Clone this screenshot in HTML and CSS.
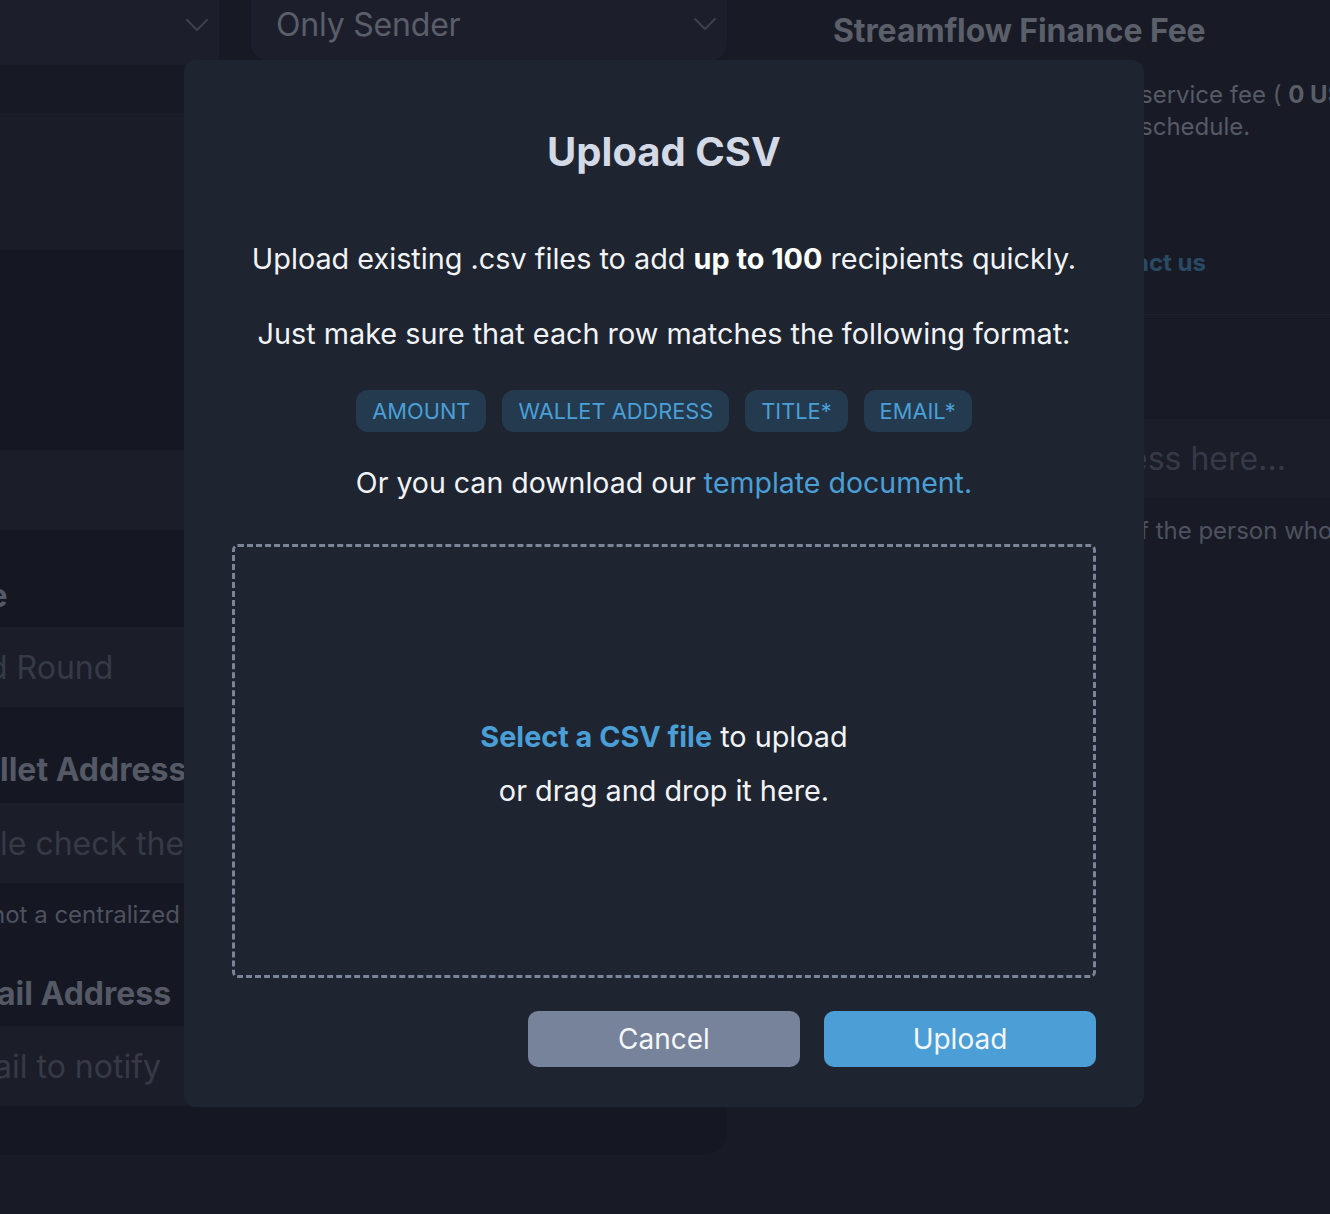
FILE: index.html
```html
<!DOCTYPE html>
<html lang="en">
<head>
<meta charset="utf-8">
<title>Upload CSV</title>
<link rel="stylesheet" href="styles.css">
</head>
<body>
<div class="page">
  <div class="left-col">
    <div class="top-row">
      <div class="dd dd1">
        <svg class="chev" width="24" height="14" viewBox="0 0 24 14"><polyline points="2,2 12,12 22,2" fill="none" stroke="#3b3f4b" stroke-width="2.2" stroke-linecap="round" stroke-linejoin="round"/></svg>
      </div>
      <div class="dd-gap"></div>
      <div class="dd dd2">
        <span class="dd-value">Only Sender</span>
        <svg class="chev" width="24" height="14" viewBox="0 0 24 14"><polyline points="2,2 12,12 22,2" fill="none" stroke="#3b3f4b" stroke-width="2.2" stroke-linecap="round" stroke-linejoin="round"/></svg>
      </div>
    </div>
    <div class="stripe"></div>
    <div class="area-block"></div>
    <div class="dark-block"></div>
    <div class="field"></div>
    <div class="label-row lr1"><span class="label cut-e">Title</span></div>
    <div class="field"><span class="placeholder cut-d">d Round</span></div>
    <div class="label-row lr2"><span class="label">llet Address</span></div>
    <div class="field"><span class="placeholder">le check the</span></div>
    <div class="help-block">
      <span class="help">not a centralized</span>
      <span class="label cut-a">ail Address</span>
    </div>
    <div class="field"><span class="placeholder cut-n">ail to notify</span></div>
    <div class="card-foot"></div>
  </div>
  <div class="right-col">
    <h2 class="fee-title">Streamflow Finance Fee</h2>
    <div class="fee-text">
      <p>service fee ( <b>0 USDC</b> )</p>
      <p>schedule.</p>
    </div>
    <div class="contact">act us</div>
    <div class="separator"></div>
    <div class="r-field"><span class="placeholder">ess here...</span></div>
    <div class="r-help">f the person who</div>
  </div>
</div>

<div class="modal">
  <h1 class="modal-title">Upload CSV</h1>
  <p class="modal-text t1">Upload existing .csv files to add <b>up to 100</b> recipients quickly.</p>
  <p class="modal-text t2">Just make sure that each row matches the following format:</p>
  <div class="tags">
    <span class="tag">AMOUNT</span>
    <span class="tag">WALLET ADDRESS</span>
    <span class="tag">TITLE*</span>
    <span class="tag">EMAIL*</span>
  </div>
  <p class="modal-text t3">Or you can download our <a class="link" href="#">template document.</a></p>
  <div class="dropzone">
    <p class="drop-line"><a class="link strong" href="#">Select a CSV file</a> to upload</p>
    <p class="drop-line">or drag and drop it here.</p>
  </div>
  <div class="actions">
    <button class="btn btn-cancel">Cancel</button>
    <button class="btn btn-upload">Upload</button>
  </div>
</div>
</body>
</html>
```
FILE: styles.css
```css
* { box-sizing: border-box; }
html, body { margin: 0; padding: 0; }
body {
  width: 1330px;
  height: 1214px;
  overflow: hidden;
  background: #181b26;
  font-family: Inter, "Noto Sans", sans-serif;
  position: relative;
}
p, h1, h2 { margin: 0; }

.page {
  display: grid;
  grid-template-columns: 727px 1fr;
  height: 1214px;
}

/* ---------- left column (dimmed background) ---------- */
.left-col {
  background: #151823;
  border-bottom-right-radius: 24px;
  display: flex;
  flex-direction: column;
  align-self: start;
  overflow: hidden;
}
.top-row {
  display: flex;
  height: 65px;
  background: #171a25;
}
.dd {
  background: #1c1f2b;
  display: flex;
  align-items: center;
}
.dd1 {
  width: 219px;
  height: 65px;
  justify-content: flex-end;
  padding: 0 10px 16px 0;
}
.dd-gap { width: 32px; }
.dd2 {
  flex: 1;
  height: 60px;
  border-radius: 0 0 16px 16px;
  justify-content: space-between;
  padding: 0 10px 12px 25px;
}
.dd-value {
  font-size: 32px;
  color: #5a5e69;
  letter-spacing: -0.2px;
}
.stripe { height: 49px; background: #171a24; border-bottom: 1px solid #1b1e29; }
.area-block { height: 136px; background: #1a1d28; }
.dark-block { height: 200px; }
.field {
  height: 80px;
  background: #1b1e29;
  display: flex;
  align-items: center;
}
.placeholder {
  font-size: 32px;
  color: #363a46;
  white-space: nowrap;
}
.cut-d { margin-left: -12px; }
.cut-n { margin-left: -6px; }
.label {
  font-size: 32px;
  font-weight: 700;
  color: #545965;
  white-space: nowrap;
}
.cut-a { margin-left: -3px; }
.label-row {
  display: flex;
  align-items: flex-end;
}
.lr1 { height: 97px; padding-bottom: 12px; }
.lr1 .cut-e { margin-left: -62px; }
.lr2 { height: 96px; padding-bottom: 14px; }
.help-block {
  height: 143px;
  display: flex;
  flex-direction: column;
  padding-top: 17px;
}
.help {
  font-size: 24px;
  color: #4d525e;
  white-space: nowrap;
  margin-left: -9px;
  height: 30px;
  line-height: 30px;
}
.help-block .label { margin-top: 44px; line-height: 40px; }
.card-foot { height: 49px; }

/* ---------- right column (dimmed background) ---------- */
.right-col {
  display: flex;
  flex-direction: column;
}
.fee-title {
  font-size: 32px;
  font-weight: 700;
  color: #5b5f6a;
  padding-left: 106px;
  line-height: 40px;
  margin-top: 11px;
  white-space: nowrap;
  letter-spacing: -0.1px;
}
.fee-text {
  margin-left: 413px;
  margin-top: 28px;
  font-size: 24px;
  color: #555a65;
  line-height: 32px;
  white-space: nowrap;
}
.fee-text b { color: #5a5e69; }
.contact {
  margin-left: 408px;
  margin-top: 104px;
  font-size: 24px;
  font-weight: 700;
  color: #2a4963;
  line-height: 32px;
  white-space: nowrap;
}
.separator {
  margin-top: 35px;
  height: 1px;
  background: #1f2330;
  margin-left: 60px;
}
.r-field {
  margin-top: 104px;
  margin-left: 60px;
  height: 79px;
  background: #1b1e29;
  display: flex;
  align-items: center;
  padding-left: 342px;
}
.r-help {
  margin-left: 413px;
  margin-top: 18px;
  font-size: 24px;
  line-height: 30px;
  color: #4d525e;
  white-space: nowrap;
}

/* ---------- modal ---------- */
.modal {
  position: absolute;
  left: 184px;
  top: 60px;
  width: 960px;
  height: 1047px;
  background: #1f2530;
  border-radius: 12px;
  display: flex;
  flex-direction: column;
  align-items: center;
  padding: 68px 48px 40px;
}
.modal-title {
  font-size: 40px;
  font-weight: 700;
  line-height: 48px;
  color: #d3d9e5;
}
.modal-text {
  font-size: 28.8px;
  line-height: 40px;
  color: #f1f3f6;
  white-space: nowrap;
}
.modal-text b { font-weight: 700; color: #ffffff; }
.t1 { margin-top: 63px; }
.t2 { margin-top: 35px; }
.t3 { margin-top: 31px; font-size: 28.5px; }
.link { color: #4a9fd6; text-decoration: none; }
.link.strong { font-weight: 700; }
.tags {
  display: flex;
  gap: 16px;
  margin-top: 36px;
}
.tag {
  height: 42px;
  padding: 0 16px;
  display: flex;
  align-items: center;
  border-radius: 12px;
  background: #243a4e;
  color: #4a9fd6;
  font-size: 21.8px;
}
.dropzone {
  margin-top: 41px;
  width: 864px;
  height: 434px;
  border: 3px dashed #7a8599;
  border-radius: 6px;
  display: flex;
  flex-direction: column;
  align-items: center;
  justify-content: center;
  padding-top: 6px;
}
.drop-line {
  font-size: 28.8px;
  line-height: 54px;
  color: #f1f3f6;
}
.actions {
  margin-top: 33px;
  align-self: flex-end;
  display: flex;
  gap: 24px;
}
.btn {
  width: 272px;
  height: 56px;
  border: 0;
  border-radius: 10px;
  font-family: Inter, "Noto Sans", sans-serif;
  font-size: 28px;
  color: #f4f6f8;
  cursor: pointer;
}
.btn-cancel { background: #76839a; }
.btn-upload { background: #4b9fd6; }
```
